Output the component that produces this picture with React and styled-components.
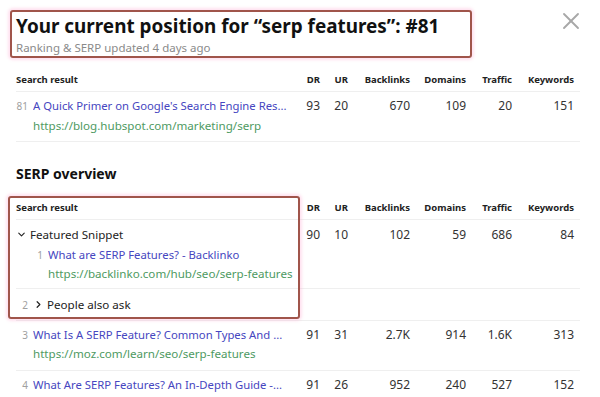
import React from "react";
import styled, { createGlobalStyle } from "styled-components";
import { ChevronDown, ChevronRight, X } from "lucide-react";

const COLS = "284px 20px 28px 62px 56px 46px 62px";

const tracked = [
  {
    pos: 81,
    title: "A Quick Primer on Google's Search Engine Res...",
    url: "https://blog.hubspot.com/marketing/serp",
    metrics: ["93", "20", "670", "109", "20", "151"],
  },
];

const results = [
  {
    pos: 3,
    title: "What Is A SERP Feature? Common Types And ...",
    url: "https://moz.com/learn/seo/serp-features",
    metrics: ["91", "31", "2.7K", "914", "1.6K", "313"],
  },
  {
    pos: 4,
    title: "What Are SERP Features? An In-Depth Guide -...",
    url: "https://www.semrush.com/blog/serp-features",
    metrics: ["91", "26", "952", "240", "527", "152"],
  },
];

const HEADERS = ["DR", "UR", "Backlinks", "Domains", "Traffic", "Keywords"];

const App = () => {
  return (
    <Page>
      <GlobalStyle />
      <Header>
        <div>
          <Title>Your current position for “serp features”: #81</Title>
          <Updated>Ranking &amp; SERP updated 4 days ago</Updated>
        </div>
        <CloseButton aria-label="close">
          <X size={28} strokeWidth={1.6} />
        </CloseButton>
      </Header>

      <Table $gap={11}>
        <HeadRow />
        {tracked.map((r) => (
          <ResultRow key={r.pos} {...r} />
        ))}
      </Table>

      <SectionTitle>SERP overview</SectionTitle>

      <Table $gap={12}>
        <HeadRow />
        <Row $pad="5px 0 4px">
          <Cell>
            <GroupLabel>
              <Chevron>
                <ChevronDown size={11} strokeWidth={2.4} />
              </Chevron>
              Featured Snippet
            </GroupLabel>
            <Nested>
              <Pos>1</Pos>
              <Lines>
                <Link href="#">What are SERP Features? - Backlinko</Link>
                <Url>https://backlinko.com/hub/seo/serp-features</Url>
              </Lines>
            </Nested>
          </Cell>
          {["90", "10", "102", "59", "686", "84"].map((m, i) => (
            <Num key={i}>{m}</Num>
          ))}
        </Row>
        <Row $pad="6px 0 5px">
          <Cell>
            <Result>
              <Pos>2</Pos>
              <GroupLabel>
                <Chevron>
                  <ChevronRight size={11} strokeWidth={2.6} />
                </Chevron>
                People also ask
              </GroupLabel>
            </Result>
          </Cell>
        </Row>
        {results.map((r) => (
          <ResultRow key={r.pos} {...r} />
        ))}
      </Table>

      <Highlight $left={10} $top={10} $width={462} $height={48} />
      <Highlight $left={8} $top={196} $width={292} $height={123} />
    </Page>
  );
};

const HeadRow = () => (
  <Row $head>
    <HeadCell $left>Search result</HeadCell>
    {HEADERS.map((h) => (
      <HeadCell key={h}>{h}</HeadCell>
    ))}
  </Row>
);

const ResultRow = ({ pos, title, url, metrics }) => (
  <Row $pad="4px 0 6px">
    <Cell>
      <Result>
        <Pos>{pos}</Pos>
        <Lines>
          <Link href="#">{title}</Link>
          <Url>{url}</Url>
        </Lines>
      </Result>
    </Cell>
    {metrics.map((m, i) => (
      <Num key={i}>{m}</Num>
    ))}
  </Row>
);

const GlobalStyle = createGlobalStyle`
  html, body {
    margin: 0;
    padding: 0;
    background: #fff;
  }
  body {
    font-family: "Noto Sans", "Open Sans", sans-serif;
    color: #222;
  }
`;

const Page = styled.div`
  position: relative;
  width: 600px;
  height: 397px;
  overflow: hidden;
  background: #fff;
  padding: 0 20px 0 16px;
  box-sizing: border-box;
`;

const Header = styled.header`
  display: flex;
  justify-content: space-between;
  align-items: flex-start;
  padding-top: 10px;
`;

const Title = styled.h1`
  margin: 2px 0 0;
  font-size: 18.9px;
  font-weight: 700;
  line-height: 28px;
  color: #111;
`;

const Updated = styled.div`
  font-size: 11.5px;
  line-height: 18px;
  margin-top: -1px;
  color: #8a8a8a;
`;

const CloseButton = styled.button`
  display: flex;
  padding: 0;
  margin: -3px -5px 0 0;
  border: none;
  background: transparent;
  color: #a8a8a8;
  cursor: pointer;
`;

const Table = styled.div`
  display: flex;
  flex-direction: column;
  margin-top: ${(p) => p.$gap}px;
`;

const Row = styled.div`
  display: grid;
  grid-template-columns: ${COLS};
  align-items: start;
  align-content: center;
  padding: ${(p) => (p.$head ? "0" : p.$pad)};
  height: ${(p) => (p.$head ? "24px" : "auto")};
  box-sizing: border-box;
  border-bottom: 1px solid #efefef;
`;

const HeadCell = styled.div`
  font-size: 9.5px;
  font-weight: 700;
  color: #222;
  text-align: ${(p) => (p.$left ? "left" : "right")};
  line-height: 14px;
  white-space: nowrap;
`;

const Cell = styled.div`
  min-width: 0;
  overflow: hidden;
  padding-right: 8px;
`;

const Num = styled.div`
  font-size: 12px;
  line-height: 20px;
  color: #333;
  text-align: right;
  white-space: nowrap;
`;

const Result = styled.div`
  display: flex;
  align-items: flex-start;
`;

const Nested = styled(Result)`
  padding-left: 15px;
`;

const Pos = styled.span`
  width: 12px;
  flex: none;
  margin-right: 5px;
  text-align: right;
  font-size: 10px;
  line-height: 20px;
  color: #a0a0a0;
`;

const Lines = styled.div`
  display: flex;
  flex-direction: column;
  min-width: 0;
`;

const Link = styled.a`
  font-size: 11.3px;
  line-height: 19.5px;
  color: #4646c0;
  text-decoration: none;
  white-space: nowrap;
  overflow: hidden;
`;

const Url = styled.span`
  font-size: 11.6px;
  line-height: 19.5px;
  color: #4e9a62;
  white-space: nowrap;
`;

const GroupLabel = styled.div`
  display: flex;
  align-items: center;
  font-size: 11.6px;
  line-height: 19.5px;
  color: #222;
`;

const Chevron = styled.span`
  display: flex;
  width: 14px;
  color: #222;
`;

const SectionTitle = styled.h2`
  margin: 22px 0 0;
  font-size: 14px;
  font-weight: 700;
  line-height: 20px;
  color: #111;
`;

const Highlight = styled.div`
  position: absolute;
  left: ${(p) => p.$left}px;
  top: ${(p) => p.$top}px;
  width: ${(p) => p.$width}px;
  height: ${(p) => p.$height}px;
  box-sizing: border-box;
  border: 2px solid #a0554b;
  border-radius: 3px;
  box-shadow: 0 0 3px 2px rgba(255, 170, 210, 0.35);
  pointer-events: none;
`;

export default App;
